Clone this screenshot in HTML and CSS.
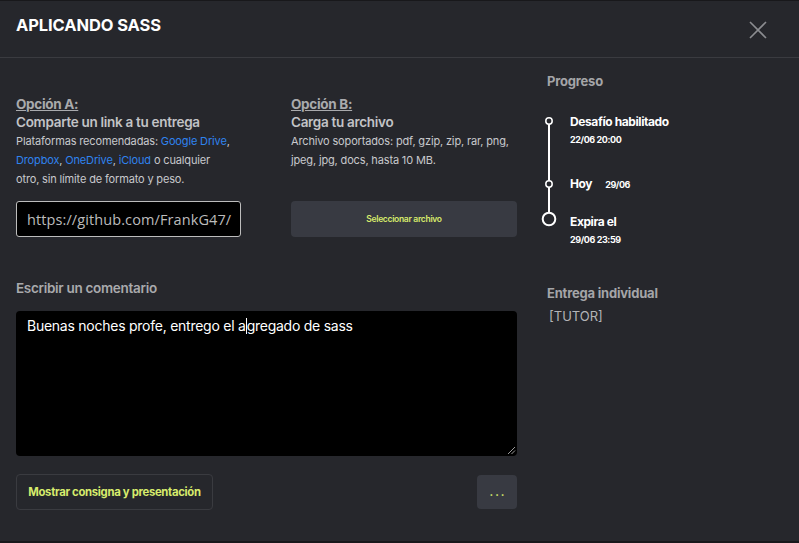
FILE: index.html
```html
<!DOCTYPE html>
<html lang="es">
<head>
<meta charset="utf-8">
<title>Aplicando SASS</title>
<link rel="stylesheet" href="styles.css">
</head>
<body>
<div class="modal">
  <header class="modal-header">
    <h1 class="title">APLICANDO SASS</h1>
    <button class="close" aria-label="Cerrar">
      <svg width="18" height="18" viewBox="0 0 18 18"><path d="M1 1L17 17M17 1L1 17" stroke="#8b8c90" stroke-width="1.6" fill="none"/></svg>
    </button>
  </header>
  <div class="modal-body">
    <div class="main">
      <div class="options">
        <div class="option">
          <h2 class="opt-label">Opción A:</h2>
          <h3 class="opt-title">Comparte un link a tu entrega</h3>
          <p class="opt-text">Plataformas recomendadas: <a href="#">Google Drive</a>, <a href="#">Dropbox</a>, <a href="#">OneDrive</a>, <a href="#">iCloud</a> o cualquier<br>otro, sin límite de formato y peso.</p>
          <div class="link-input">https://github.com/FrankG47/</div>
        </div>
        <div class="option">
          <h2 class="opt-label">Opción B:</h2>
          <h3 class="opt-title">Carga tu archivo</h3>
          <p class="opt-text">Archivo soportados: pdf, gzip, zip, rar, png, jpeg, jpg, docs, hasta 10 MB.</p>
          <button class="file-btn">Seleccionar archivo</button>
        </div>
      </div>
      <div class="comment">
        <label class="comment-label">Escribir un comentario</label>
        <div class="comment-box">Buenas noches profe, entrego el a<span class="caret"></span>gregado de sass
          <svg class="grip" width="9" height="9" viewBox="0 0 9 9"><path d="M8 1L1 8M8 4.5L4.5 8" stroke="#9a9a9a" stroke-width="1"/></svg>
        </div>
      </div>
      <div class="actions">
        <button class="consigna-btn">Mostrar consigna y presentación</button>
        <button class="more-btn">...</button>
      </div>
    </div>
    <aside class="side">
      <h2 class="side-title">Progreso</h2>
      <div class="timeline">
        <svg class="tl-line" width="16" height="122" viewBox="0 0 16 122">
          <line x1="8" y1="10" x2="8" y2="101" stroke="#fff" stroke-width="2"/>
          <circle cx="8" cy="9" r="3.2" fill="#26272c" stroke="#fff" stroke-width="1.5"/>
          <circle cx="8" cy="72" r="3.2" fill="#26272c" stroke="#fff" stroke-width="1.5"/>
          <circle cx="8" cy="107" r="6.3" fill="#26272c" stroke="#fff" stroke-width="2"/>
        </svg>
        <div class="tl-items">
          <div class="tl-item first">
            <div class="tl-name">Desafío habilitado</div>
            <div class="tl-date">22/06 20:00</div>
          </div>
          <div class="tl-item inline">
            <span class="tl-name">Hoy</span><span class="tl-date">29/06</span>
          </div>
          <div class="tl-item last">
            <div class="tl-name">Expira el</div>
            <div class="tl-date">29/06 23:59</div>
          </div>
        </div>
      </div>
      <h2 class="side-title entrega">Entrega individual</h2>
      <div class="tutor">[TUTOR]</div>
    </aside>
  </div>
</div>
</body>
</html>
```
FILE: styles.css
```css
* { box-sizing: border-box; }
html, body { margin: 0; padding: 0; }
body {
  background: #26272c;
  font-family: Inter, "Liberation Sans", Arial, sans-serif;
  color: #fff;
}
.modal {
  width: 799px;
  height: 543px;
  background: #26272c;
  border-top: 1px solid #18181b;
  border-bottom: 2px solid #18181b;
  display: flex;
  flex-direction: column;
  overflow: hidden;
}
.modal-header {
  height: 57px;
  flex: none;
  border-bottom: 1px solid #3a3b40;
  display: flex;
  justify-content: space-between;
  align-items: flex-start;
  padding: 14px 32px 0 16px;
}
.title {
  margin: 0;
  font-size: 16.5px;
  font-weight: 700;
  letter-spacing: -0.1px;
  color: #fff;
}
.close {
  background: none;
  border: 0;
  padding: 0;
  margin-top: 6px;
  width: 18px;
  height: 18px;
  display: block;
}
.close svg { display: block; }
.modal-body {
  display: flex;
  gap: 30px;
  padding: 0 16px;
}
.main {
  width: 501px;
  flex: none;
  padding-top: 37px;
}
.options {
  display: grid;
  grid-template-columns: 225px 226px;
  column-gap: 50px;
}
.option { display: flex; flex-direction: column; }
.opt-label {
  margin: 0;
  font-size: 13.5px;
  font-weight: 700;
  color: #a9aaad;
  text-decoration: underline;
  letter-spacing: -0.3px;
  line-height: 18px;
}
.opt-title {
  margin: 0;
  font-size: 13.5px;
  font-weight: 600;
  color: #c2c3c6;
  letter-spacing: -0.3px;
  line-height: 18px;
}
.opt-text {
  margin: 1px 0 0;
  font-size: 11px;
  line-height: 19px;
  color: #c8c9cc;
  letter-spacing: -0.15px;
  height: 62px;
}
.opt-text a { color: #2f83ef; text-decoration: none; }
.link-input {
  margin-top: 7px;
  height: 36px;
  background: #000;
  border: 1px solid #bdbdbd;
  border-radius: 3px;
  padding: 0 10px;
  display: flex;
  align-items: center;
  font-size: 14.5px;
  letter-spacing: 0.1px;
  color: #bcbcbc;
  white-space: nowrap;
  overflow: hidden;
  font-family: "Open Sans", Inter, sans-serif;
}
.file-btn {
  margin-top: 7px;
  height: 36px;
  background: #383a42;
  border: 0;
  border-radius: 4px;
  color: #d7ec6c;
  font-family: Inter, sans-serif;
  font-size: 8.5px;
  font-weight: 600;
  letter-spacing: -0.3px;
  padding: 0;
}
.comment { margin-top: 42px; }
.comment-label {
  display: block;
  font-size: 13.5px;
  font-weight: 600;
  color: #a9aaad;
  letter-spacing: -0.3px;
  line-height: 18px;
}
.comment-box {
  position: relative;
  margin-top: 14px;
  height: 145px;
  background: #000;
  border-radius: 4px;
  padding: 6px 11px;
  font-size: 14px;
  color: #fff;
  letter-spacing: -0.25px;
  line-height: 18px;
}
.caret {
  display: inline-block;
  width: 1px;
  height: 16px;
  background: #fff;
  vertical-align: -3px;
}
.grip { position: absolute; right: 1px; bottom: 1px; }
.actions {
  margin-top: 18px;
  display: flex;
  justify-content: space-between;
  align-items: center;
}
.consigna-btn {
  height: 36px;
  width: 197px;
  background: transparent;
  border: 1px solid #3a3b40;
  border-radius: 4px;
  color: #d7ec6c;
  font-family: Inter, sans-serif;
  font-size: 11.3px;
  font-weight: 700;
  letter-spacing: -0.3px;
  padding: 0;
}
.more-btn {
  height: 34px;
  width: 40px;
  background: #383a42;
  border: 0;
  border-radius: 4px;
  color: #d7ec6c;
  font-family: Inter, sans-serif;
  font-size: 11px;
  font-weight: 700;
  letter-spacing: 2px;
  padding: 0 0 0 2px;
}
.side { flex: 1; padding-top: 14px; }
.side-title {
  margin: 0;
  font-size: 13px;
  font-weight: 700;
  color: #a4a5a8;
  letter-spacing: -0.2px;
  line-height: 18px;
}
.timeline {
  display: flex;
  margin-top: 22px;
  margin-left: -6px;
}
.tl-line { display: block; flex: none; }
.tl-items { margin-left: 13px; }
.tl-name {
  font-size: 12px;
  font-weight: 700;
  letter-spacing: -0.4px;
  line-height: 16px;
  color: #fff;
}
.tl-date {
  font-size: 9px;
  font-weight: 700;
  letter-spacing: -0.4px;
  line-height: 12px;
  color: #fff;
  margin-top: 4px;
}
.tl-item.first { margin-top: 2px; }
.tl-item.inline {
  margin-top: 29px;
  display: flex;
  align-items: baseline;
  gap: 13px;
}
.tl-item.last { margin-top: 22px; }
.tl-item.last .tl-date { margin-top: 4px; }
.entrega { margin-top: 38px; }
.tutor {
  margin-top: 5px;
  padding-left: 2px;
  font-size: 13px;
  color: #b3b4b7;
  line-height: 18px;
}
```
